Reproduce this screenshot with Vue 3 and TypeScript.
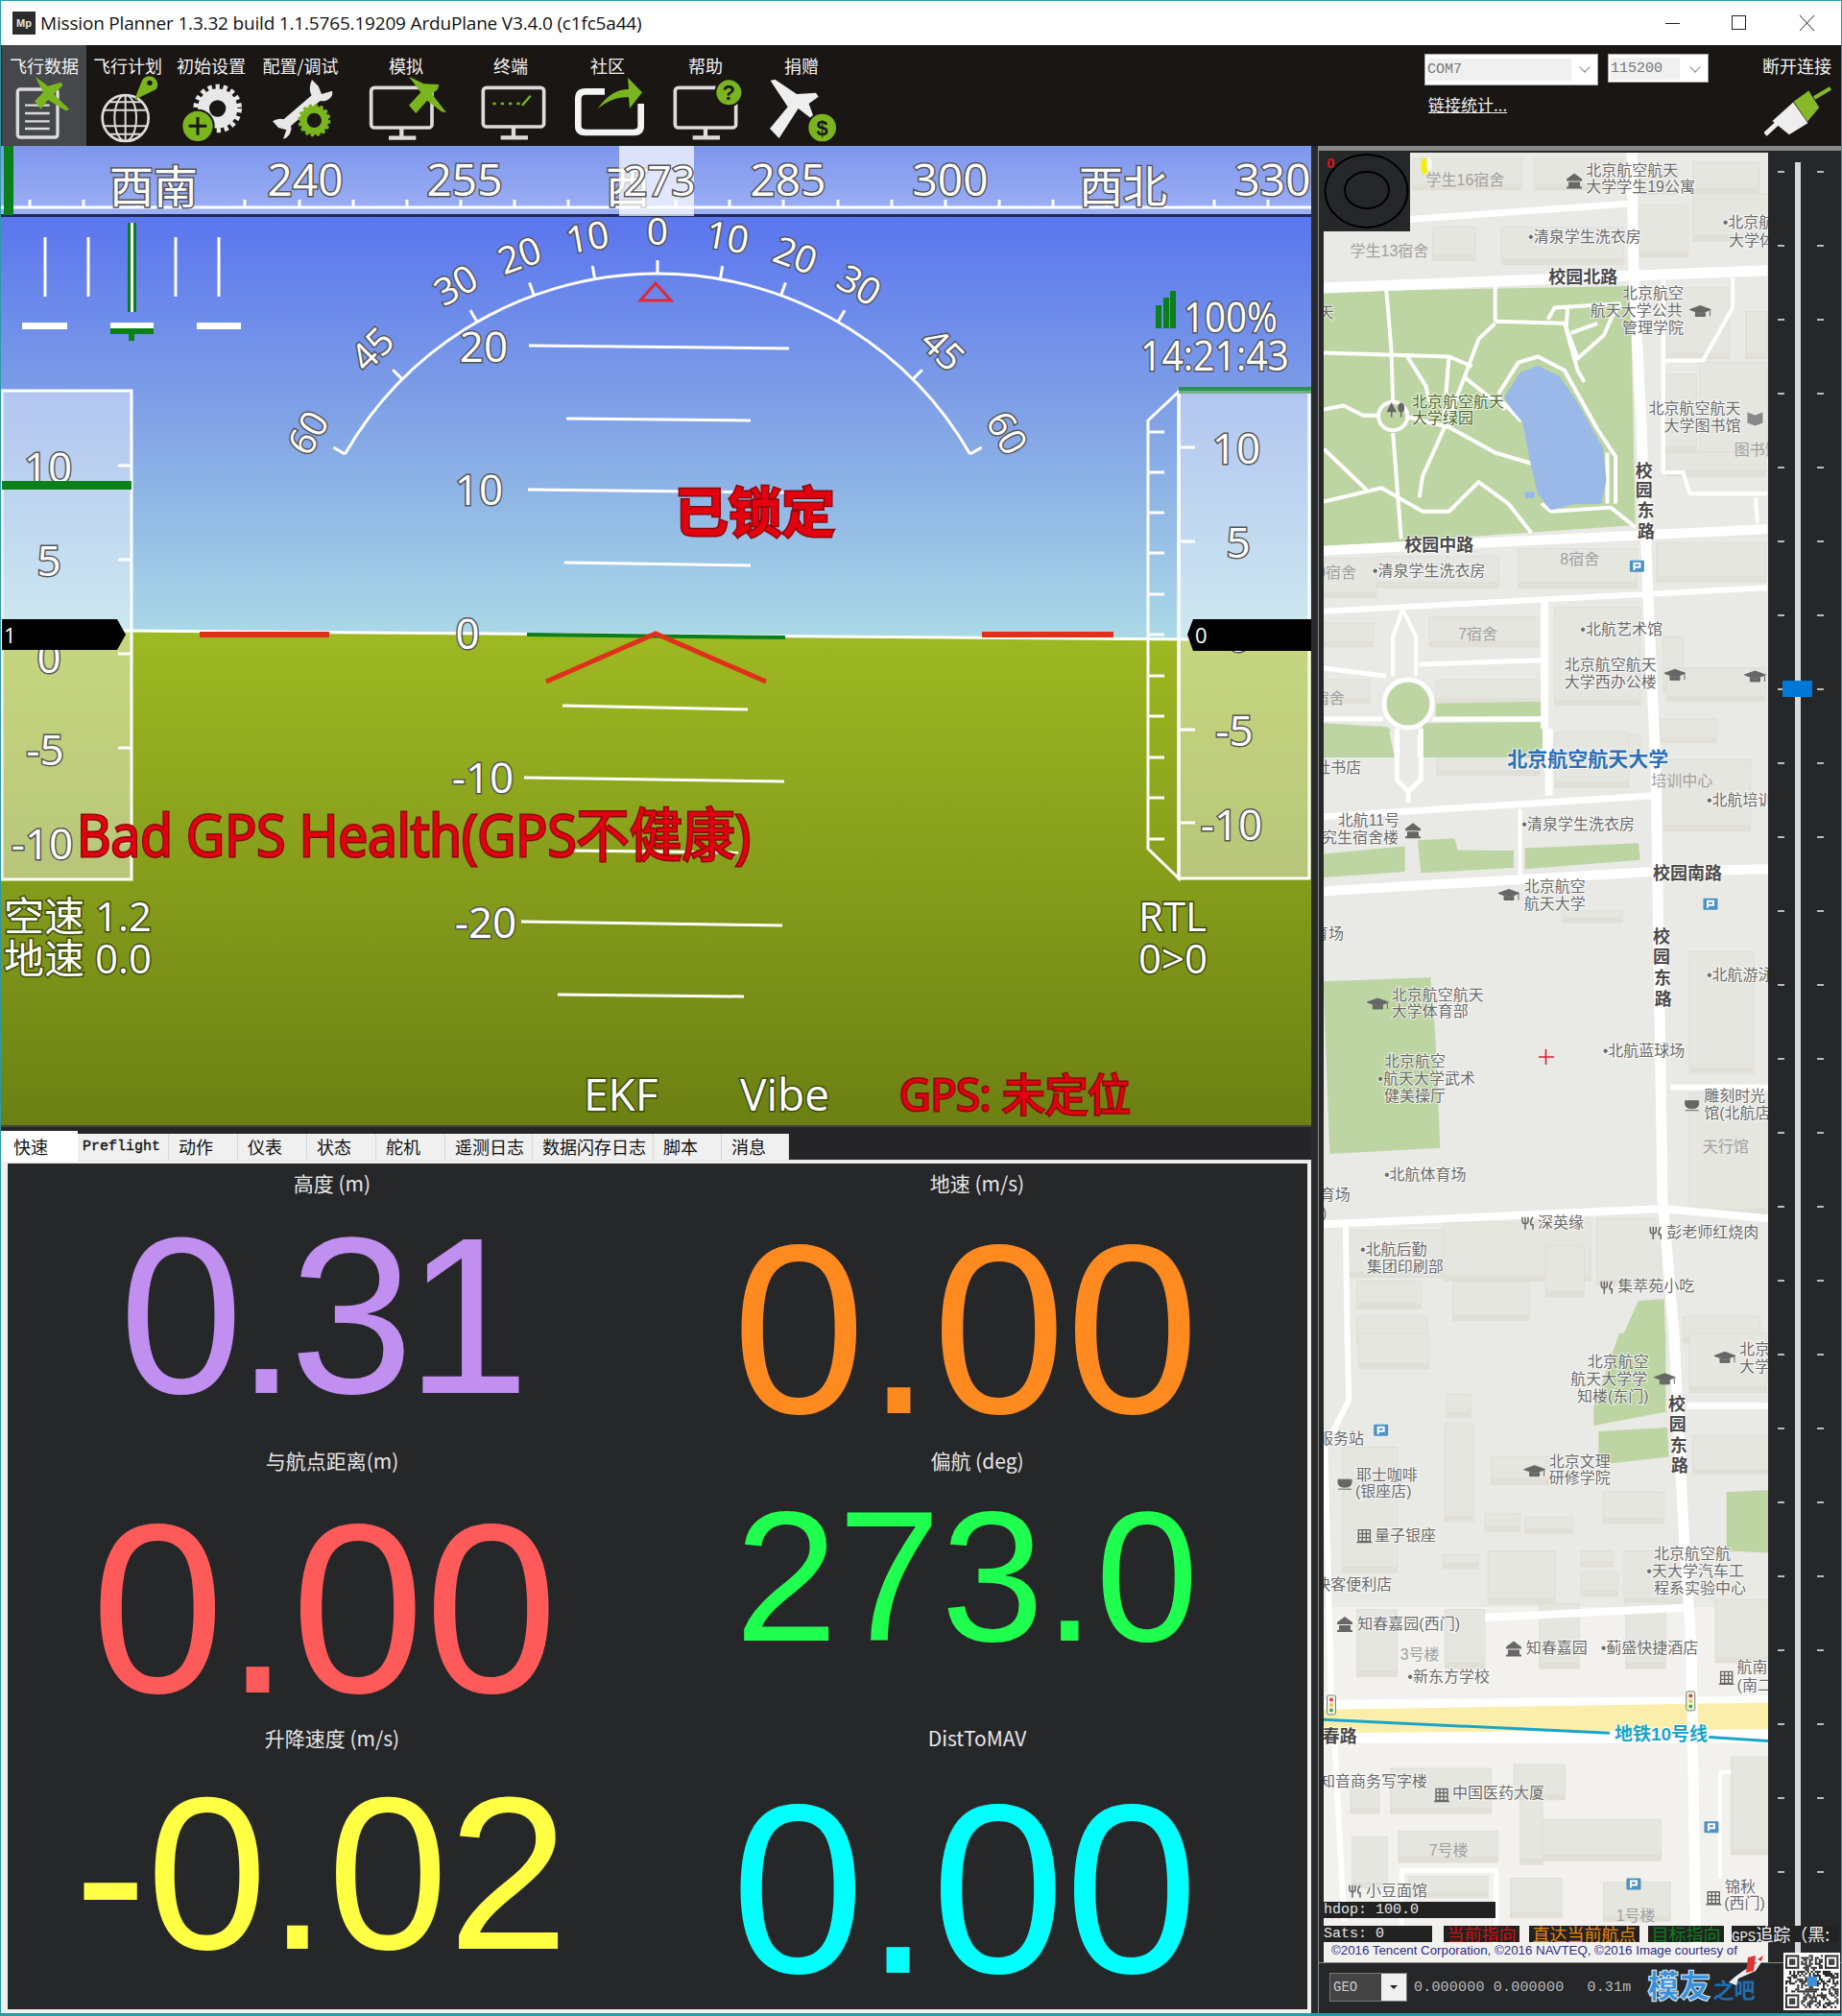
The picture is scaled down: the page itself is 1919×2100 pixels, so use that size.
<template>
  <div class="window">
    <!-- 標題列 -->
    <div class="titlebar">
      <div class="app-icon"><span>Mp</span></div>
      <span class="title">Mission Planner 1.3.32 build 1.1.5765.19209 ArduPlane V3.4.0 (c1fc5a44)</span>
      <div class="win-btns">
        <svg width="176" height="20" viewBox="0 0 176 20">
          <path d="M0 10.5H15" stroke="#222" fill="none" />
          <rect x="69.5" y="2.5" width="14" height="14" stroke="#222" fill="none" />
          <path d="M140 2L155 18M155 2L140 18" stroke="#222" fill="none" />
        </svg>
      </div>
    </div>

    <!-- 工具列 -->
    <div class="toolbar">
      <div
        v-for="item in menu"
        :key="item.id"
        class="menu-item"
        :class="{ active: item.id === 'data' }"
        :style="{ width: item.w + 'px' }"
      >
        <span class="menu-label">{{ item.label }}</span>
        <svg class="menu-icon" :width="item.w" height="74" :viewBox="`${item.vx} 84 ${item.w * 3} 222`">
          <g v-if="item.id === 'data'">
            <rect x="55" y="135" width="125" height="150" rx="8" class="ico-line" stroke-width="10" />
            <path d="M78 185H155M78 210H155M78 235H155M78 258H155" class="ico-line" stroke-width="7" />
            <path class="ico-green" d="M110 95L150 125L190 113L197 122L168 150L217 198L205 202L150 168L128 197L108 172L135 145Z" />
          </g>
          <g v-if="item.id === 'plan'">
            <circle cx="392" cy="225" r="72" class="ico-line" stroke-width="8" />
            <ellipse cx="392" cy="225" rx="34" ry="72" class="ico-line" stroke-width="6" />
            <path d="M392 153V297M325 200H459M325 250H459M340 175H444M340 275H444" class="ico-line" stroke-width="6" />
            <path class="ico-green" d="M420 168L445 105A26 26 0 1 1 488 135Z" />
            <circle cx="468" cy="115" r="8" fill="#1a1614" />
          </g>
          <g v-if="item.id === 'setup'">
            <circle cx="680" cy="195" r="44" fill="none" stroke="#e8e8e8" stroke-width="36" />
            <circle cx="680" cy="195" r="68" fill="none" stroke="#e8e8e8" stroke-width="16" stroke-dasharray="13 11" />
            <circle cx="618" cy="250" r="50" fill="#7ab51d" stroke="#1a1614" stroke-width="6" />
            <path d="M618 222V278M590 250H646" stroke="#1a1614" stroke-width="9" fill="none" />
          </g>
          <g v-if="item.id === 'config'">
            <path d="M990 160L885 250" stroke="#e8e8e8" stroke-width="30" fill="none" />
            <path d="M975 105C955 150 985 180 1020 170C1040 160 1040 150 1038 140L1005 150L995 125Z" fill="#e8e8e8" />
            <path d="M852 235C880 215 915 235 910 262C905 285 890 290 885 290L895 262L870 255Z" fill="#e8e8e8" />
            <circle cx="982" cy="232" r="34" fill="none" stroke="#7ab51d" stroke-width="22" />
            <circle cx="982" cy="232" r="46" fill="none" stroke="#7ab51d" stroke-width="10" stroke-dasharray="10 8" />
          </g>
          <g v-if="item.id === 'sim'">
            <rect x="50" y="130" width="190" height="125" rx="10" class="ico-line" stroke-width="11" />
            <path d="M145 255V285M105 287H190" class="ico-line" stroke-width="13" />
            <path class="ico-green" d="M168 95L215 118L262 120L258 135L240 150L285 208L270 205L225 170L190 210L168 185L205 145Z" />
          </g>
          <g v-if="item.id === 'term'">
            <rect x="400" y="130" width="190" height="122" rx="10" class="ico-line" stroke-width="11" />
            <path d="M495 252V282M455 286H540" class="ico-line" stroke-width="13" />
            <path d="M430 180h10M455 180h10M480 180h10M505 180h10" stroke="#7ab51d" stroke-width="7" fill="none" />
            <path d="M522 185L548 155" stroke="#7ab51d" stroke-width="7" fill="none" />
          </g>
          <g v-if="item.id === 'comm'">
            <path d="M780 142H720Q697 142 697 165V250Q697 270 720 270H870Q893 270 893 250V180" fill="none" stroke="#f4f4f4" stroke-width="20" />
            <path class="ico-green" d="M758 196C790 150 820 135 855 135L852 98L897 145L858 195L855 160C820 158 790 170 758 196Z" />
          </g>
          <g v-if="item.id === 'help'">
            <rect x="1000" y="130" width="190" height="125" rx="10" class="ico-line" stroke-width="11" />
            <path d="M1095 255V283M1055 286H1140" class="ico-line" stroke-width="13" />
            <circle cx="1168" cy="145" r="42" fill="#7ab51d" stroke="#1a1614" stroke-width="6" />
            <text x="1168" y="168" class="ico-glyph">?</text>
          </g>
          <g v-if="item.id === 'donate'">
            <path fill="#eee" d="M1298 108L1312 104L1380 150L1440 146L1448 158L1418 180L1438 235L1420 222L1385 195L1325 288L1296 258L1352 190Z" />
            <circle cx="1460" cy="255" r="46" fill="#7ab51d" stroke="#1a1614" stroke-width="6" />
            <text x="1460" y="280" class="ico-glyph">$</text>
          </g>
        </svg>
      </div>

      <div class="ports">
        <div class="port-row">
          <div class="combo combo-com"><span class="combo-txt">COM7</span><i class="chev"></i></div>
          <div class="combo combo-baud"><span class="combo-txt">115200</span><i class="chev"></i></div>
        </div>
        <a class="stats-link">链接统计...</a>
      </div>

      <div class="disconnect">
        <span class="menu-label">断开连接</span>
        <svg width="70" height="52" viewBox="0 0 70 52">
          <path d="M1 50L14 38" stroke="#eee" stroke-width="5" fill="none" />
          <path d="M10 36L30 18L44 38L26 49Z" fill="#eee" stroke="#eee" stroke-width="2" />
          <path d="M32 16L46 6L56 22L45 35Z" fill="#86b82a" stroke="#86b82a" stroke-width="2" />
          <path d="M52 12L69 2" stroke="#86b82a" stroke-width="4" fill="none" />
        </svg>
      </div>
    </div>

    <div class="main">
      <div class="left-col">
        <!-- HUD -->
        <svg class="hud" width="1365" height="1020" viewBox="1 153 1365 1020">
          <defs>
            <linearGradient id="sky" x1="0" y1="0" x2="0" y2="1">
              <stop offset="0" stop-color="#5b75ee" />
              <stop offset="0.5" stop-color="#83a5e6" />
              <stop offset="1" stop-color="#abdae6" />
            </linearGradient>
            <linearGradient id="ground" x1="0" y1="0" x2="0" y2="1">
              <stop offset="0" stop-color="#9fb923" />
              <stop offset="1" stop-color="#6c8013" />
            </linearGradient>
            <linearGradient id="headTape" x1="0" y1="0" x2="0" y2="1">
              <stop offset="0" stop-color="#7f96ee" />
              <stop offset="1" stop-color="#9cb0f4" />
            </linearGradient>
          </defs>
          <rect x="0" y="226" width="1366" height="442" fill="url(#sky)" />
          <path d="M0 657L1366 668V1173H0Z" fill="url(#ground)" />

          <!-- 俯仰刻度 -->
          <path v-for="(l, i) in pitchLines" :key="i" :d="`M${l[0]} ${l[1]}L${l[2]} ${l[3]}`" class="wline" />
          <path d="M0 657L1366 668" class="wline" stroke-width="3" />
          <text v-for="p in pitchLabels" :key="p.t" :x="p.x" :y="p.y + 16" class="ht mid" font-size="44">{{ p.t }}</text>

          <!-- 滾轉弧 -->
          <path :d="rollArc" class="wline" stroke-width="3" />
          <path v-for="r in rollMarks" :key="r.a" :d="r.tick" class="wline" stroke-width="2.5" />
          <text
            v-for="r in rollMarks"
            :key="'t' + r.a"
            :x="r.lx"
            :y="r.ly"
            :transform="`rotate(${r.a} ${r.lx} ${r.ly})`"
            class="ht mid central"
            font-size="39"
          >{{ Math.abs(r.a) }}</text>
          <path d="M683 296L699 314H667Z" fill="none" stroke="#dd2a3a" stroke-width="3" />

          <!-- 航向帶 -->
          <rect x="0" y="153" width="1366" height="71" fill="url(#headTape)" />
          <rect x="0" y="224" width="1366" height="3" fill="#1f2a58" />
          <path v-for="x in headTicks" :key="x" :d="`M${x} 217V209`" class="wline" stroke-width="2" />
          <path d="M0 217H1366" class="wline" stroke-width="3" />
          <rect x="4" y="153" width="10" height="72" fill="#0a7f1a" />
          <text v-for="h in headLabels" :key="h.t" :x="h.x" :y="h.y" class="ht mid cjk" font-size="46">{{ h.t }}</text>
          <text x="654" y="212" class="ht mid cjk" font-size="46">西</text>
          <rect x="645" y="153" width="78" height="73" fill="#fff" fill-opacity="0.72" />
          <text x="687" y="205" class="ht mid" font-size="44">273</text>

          <!-- 側滑條 -->
          <path v-for="x in [47, 92, 183, 228]" :key="x" :d="`M${x} 248V310`" class="wline" stroke-width="3" />
          <rect x="133" y="233" width="9" height="93" fill="#0a7f1a" />
          <rect x="136" y="233" width="3" height="93" fill="#fff" />
          <rect x="23" y="337" width="47" height="7" fill="#fff" />
          <rect x="115" y="337" width="45" height="6" fill="#fff" />
          <rect x="205" y="337" width="46" height="7" fill="#fff" />
          <rect x="115" y="343" width="45" height="6" fill="#0a7f1a" />
          <rect x="134" y="348" width="6" height="8" fill="#0a7f1a" />

          <!-- 空速帶 -->
          <rect x="2" y="408" width="135" height="509" fill="#fff" fill-opacity="0.42" stroke="#fff" stroke-width="3" />
          <path v-for="y in [486, 584, 682, 780, 878]" :key="y" :d="`M123 ${y}H136`" class="wline" />
          <text v-for="s in speedLabels" :key="s.t" :x="s.x" :y="s.y + 16" class="ht mid" font-size="44">{{ s.t }}</text>
          <rect x="2" y="502" width="135" height="9" fill="#0a7f1a" />
          <path d="M2 646H122L131 662L122 678H2Z" fill="#000" />
          <text x="4" y="671" class="lbl-in">1</text>

          <!-- 高度帶 -->
          <path d="M1196 439L1228 409V916L1196 885Z" fill="none" stroke="#fff" stroke-width="3" />
          <path v-for="y in altTicksL" :key="y" :d="`M1197 ${y}H1213`" class="wline" />
          <rect x="1228" y="409" width="136" height="507" fill="#fff" fill-opacity="0.42" stroke="#fff" stroke-width="3" />
          <rect x="1228" y="404" width="138" height="4" fill="#2f8f55" />
          <rect x="1228" y="408" width="138" height="3" fill="#6fb08a" />
          <path v-for="y in [467, 565, 761, 858]" :key="y" :d="`M1230 ${y}H1245`" class="wline" />
          <text v-for="s in altLabels" :key="s.t" :x="s.x" :y="s.y + 16" class="ht mid" font-size="44">{{ s.t }}</text>
          <path d="M1237 662L1243 646H1366V679H1243Z" fill="#000" />
          <text x="1245" y="671" class="lbl-in">0</text>

          <!-- 姿態指示 -->
          <rect x="208" y="659" width="135" height="6" fill="#e0301a" />
          <rect x="1023" y="659" width="137" height="6" fill="#e0301a" />
          <path d="M549 662L818 665" stroke="#0a7f1a" stroke-width="4" fill="none" />
          <path d="M569 711L683 661L798 711" stroke="#e0301a" stroke-width="5" fill="none" />

          <!-- 訊號與時間 -->
          <rect x="1204" y="319" width="6" height="24" fill="#0a7f1a" />
          <rect x="1212" y="311" width="6" height="32" fill="#0a7f1a" />
          <rect x="1219" y="304" width="6" height="39" fill="#0a7f1a" />
          <text x="1233" y="347" class="ht" font-size="44" textLength="98" lengthAdjust="spacingAndGlyphs">100%</text>
          <text x="1188" y="387" class="ht" font-size="44" textLength="155" lengthAdjust="spacingAndGlyphs">14:21:43</text>

          <!-- 狀態文字 -->
          <text x="703" y="555" class="warn heavy" font-size="56" textLength="167" lengthAdjust="spacingAndGlyphs">已锁定</text>
          <text x="80" y="893" class="warn" font-size="60" textLength="702" lengthAdjust="spacingAndGlyphs">Bad GPS Health(GPS不健康)</text>
          <text x="4" y="971" class="ht plain" font-size="42">空速 1.2</text>
          <text x="4" y="1015" class="ht plain" font-size="42">地速 0.0</text>
          <text x="1186" y="971" class="ht plain" font-size="42">RTL</text>
          <text x="1186" y="1015" class="ht plain" font-size="42">0&gt;0</text>
          <text x="608" y="1158" class="ht plain" font-size="46">EKF</text>
          <text x="771" y="1158" class="ht plain" font-size="46">Vibe</text>
          <text x="937" y="1158" class="warn" font-size="46" textLength="241" lengthAdjust="spacingAndGlyphs">GPS: 未定位</text>
        </svg>

        <!-- 分頁 -->
        <div class="tabs">
          <div
            v-for="(t, i) in tabs"
            :key="t.label"
            class="tab"
            :class="{ active: i === 0, mono: t.label === 'Preflight' }"
            :style="{ width: t.w + 'px' }"
          >{{ t.label }}</div>
        </div>
        <div class="tab-page">
          <div class="quick">
            <div v-for="q in quick" :key="q.label" class="quick-cell">
              <div class="quick-label">{{ q.label }}</div>
              <div
                class="quick-value"
                :style="{ color: q.color, fontSize: q.size + 'px', marginTop: q.dy + 'px', marginRight: q.dx * 2 + 'px', letterSpacing: q.ls + 'px' }"
              >{{ q.value }}</div>
            </div>
          </div>
        </div>
      </div>

      <div class="right-col">
        <div class="map-row">
          <!-- 地圖 -->
          <svg class="map" width="463" height="1885" viewBox="1380 160 463 1885">
            <defs>
              <g id="i-home"><path d="M-8 -2L0 -8L8 -2V0H-8ZM-6 1H6V6H8V8H-8V6H-6Z" fill="#666" /></g>
              <g id="i-hat"><path d="M-11 -2L0 -6L11 -2L0 2ZM-5 1L0 3L5 1V5H-5ZM10 -1V5" fill="#666" stroke="#666" /></g>
              <g id="i-book"><path d="M-8 -6L0 -3L8 -6V5L0 8L-8 5Z" fill="#888" /></g>
              <g id="i-tree"><path d="M-9 6V-1M-9 -8L-13 0H-5ZM1 6V0" stroke="#666" stroke-width="1.5" fill="#666" /><ellipse cx="1" cy="-4" rx="3.5" ry="5" fill="#666" /></g>
              <g id="i-p"><rect x="-7.5" y="-6" width="15" height="12" rx="1" fill="#4c93c4" /><path d="M-3 4V-3H3V1H-3" stroke="#fff" stroke-width="2" fill="none" /></g>
              <g id="i-cup"><path d="M-7 -5H7V-2Q7 3 0 3Q-7 3 -7 -2ZM-7 5H7" fill="#666" stroke="#666" /></g>
              <g id="i-bldg"><path d="M-6 -6H6V6H-6ZM-6 -2H6M-6 2H6M-2 -6V6M2 -6V6M-8 7H8" fill="none" stroke="#666" stroke-width="1.4" /></g>
              <g id="i-fork"><path d="M-6 -6V-2Q-6 1 -3 1V7M-3 -6V0M0 -6V-2Q0 1 -3 1M5 -6Q2 -2 3 2H5V7" fill="none" stroke="#666" stroke-width="1.5" /></g>
              <g id="i-light"><rect x="-4.5" y="-10" width="9" height="20" rx="2" fill="#f6f3e6" stroke="#6a8a6a" /><circle cy="-5.5" r="2" fill="#c44" /><circle r="2" fill="#dc4" /><circle cy="5.5" r="2" fill="#4a4" /></g>
            </defs>
            <rect x="1380" y="160" width="463" height="1885" fill="#e9e9e5" />
            <rect x="1380" y="1675" width="463" height="370" fill="#f2f1ed" />

            <!-- 建物 -->
            <g v-for="(b, i) in lots" :key="'lot' + i">
              <rect :x="b.x" :y="b.y" :width="b.w" :height="b.h" fill="#e6e6e1" stroke="#dedfd8" />
              <rect :x="b.x" :y="b.y + b.h - 6" :width="b.w" height="6" fill="#e0e0d8" />
            </g>

            <!-- 綠地與水面 -->
            <g :transform="zoneTf.a">
              <path d="M0 380L930 365L945 975L0 1030Z" class="green" />
              <path d="M340 1430L660 1425V1462L340 1465ZM300 1480L665 1478V1568H300ZM0 1480L195 1490L215 1568H0Z" class="green" />
              <path v-for="(d, i) in roadsA" :key="'ra' + i" :d="d" class="road thin" />
              <path d="M555 650L600 590L650 575L710 600L760 660L800 720L840 780L850 860L835 915L760 915L690 930L655 890L630 800L610 710L580 680Z" fill="#9bb9e8" stroke="#9bb9e8" stroke-width="5" stroke-linejoin="round" vector-effect="non-scaling-stroke" />
              <path d="M610 890h30v16h-30z" fill="#9bb9e8" />
              <ellipse cx="210" cy="697" rx="44" ry="36" fill="none" stroke="#fff" stroke-width="4" vector-effect="non-scaling-stroke" />
              <path v-for="(d, i) in roadsAWide" :key="'rb' + i" :d="d.d" class="road" :stroke-width="d.w" />
            </g>
            <g :transform="zoneTf.b">
              <path d="M0 0H215L200 60H0ZM320 0H690V50H320Z" class="green" />
              <path d="M0 320L260 300V365L0 380ZM300 285L415 280L425 310L600 312L600 355L310 368ZM635 305L990 292L995 335L635 358Z" class="green" />
              <path d="M5 645L340 635L355 780L370 1070L25 1085Z" class="green" />
              <path d="M990 1460L1070 1455L1075 1568H930Z" class="green" />
              <path v-for="(d, i) in roadsB" :key="'rc' + i" :d="d.d" class="road" :stroke-width="d.w" />
            </g>
            <g :transform="zoneTf.c">
              <path d="M930 0H1075V200L850 235L850 190Z" class="green" />
              <path d="M865 250L1080 240L1085 315L865 335Z" class="green" />
              <path d="M1265 405L1395 400V560L1265 555Z" class="green" />
              <path d="M0 935L1395 925V1045H0Z" fill="#fff" />
              <path d="M0 960L1395 942V1010L0 1020Z" fill="#fbeeaa" />
              <path v-for="(d, i) in roadsC" :key="'rd' + i" :d="d.d" class="road" :stroke-width="d.w" />
              <path d="M0 985L900 1020M1210 1030L1395 1040" fill="none" stroke="#1aa5c8" stroke-width="3" vector-effect="non-scaling-stroke" />
            </g>
            <path d="M1701 160L1703 285L1711 444L1718 623L1726 800L1733 1250L1745 1390L1755 1594L1763 1716L1768 2045" class="road" stroke-width="11" />

            <!-- 圓環 -->
            <circle cx="1468" cy="734" r="25" fill="#bdd5a2" stroke="#fff" stroke-width="5" />

            <!-- 標記 -->
            <use v-for="(m, i) in marks" :key="'m' + i" :href="'#i-' + m.t" :x="m.x" :y="m.y" />
            <path d="M1604 1102H1620M1611.5 1094V1110" stroke="#e02030" stroke-width="1.6" />

            <!-- 文字 -->
            <text
              v-for="(l, i) in labels"
              :key="'l' + i"
              :x="l.x"
              :y="l.y"
              class="place"
              :class="l.k"
            >{{ l.t }}</text>

            <!-- 羅盤 -->
            <rect x="1380" y="160" width="90" height="82" fill="#262729" />
            <ellipse cx="1424.5" cy="200" rx="43" ry="38" fill="none" stroke="#000" stroke-width="2" />
            <ellipse cx="1425" cy="199" rx="23" ry="19" fill="none" stroke="#000" stroke-width="2" />
            <text x="1383" y="176" class="red-zero">0</text>
            <ellipse cx="1485" cy="174" rx="4" ry="9" fill="#f2ee1a" />
            <ellipse cx="1490" cy="172" rx="2.5" ry="7" fill="#fff" />
          </svg>

          <div class="slider">
            <i v-for="y in sliderTicks" :key="y" class="tick tick-l" :style="{ top: y + 'px' }"></i>
            <i v-for="y in sliderTicks" :key="'r' + y" class="tick tick-r" :style="{ top: y + 'px' }"></i>
            <div class="track"></div>
            <div class="thumb"></div>
          </div>

          <!-- 地圖覆蓋文字 -->
          <div class="ovl hdop">hdop: 100.0</div>
          <div class="ovl sats">Sats: 0</div>
          <div class="ovl tag-cur">当前指向</div>
          <div class="ovl tag-wp">直达当前航点</div>
          <div class="ovl tag-tgt">目标指向</div>
          <div class="ovl tag-gps"><span class="mono-part">GPS</span>追踪（黑:</div>
          <div class="copyright">©2016 Tencent Corporation, ©2016 NAVTEQ, ©2016 Image courtesy of</div>
        </div>

        <div class="status-bar">
          <div class="geo"><span class="geo-txt">GEO</span><span class="geo-btn"><i></i></span></div>
          <span class="coord">0.000000 0.000000</span>
          <span class="coord dist">0.31m</span>
          <div class="logo">
            <span class="logo-a">模友</span><span class="logo-b">之吧</span>
            <svg class="logo-plane" width="40" height="34" viewBox="0 0 40 34">
              <path d="M2 30Q14 18 38 6L30 18L12 26L10 33Z" fill="#eee" />
              <path d="M22 4L30 2L28 18L20 20ZM32 6L38 2L36 8Z" fill="#d33" />
            </svg>
          </div>
          <svg class="qr" width="59" height="60" viewBox="0 0 59 60">
            <rect width="59" height="60" fill="#fff" />
            <rect v-for="(c, i) in qrCells" :key="i" :x="c.x" :y="c.y" width="2.05" height="2.05" fill="#222" />
            <rect x="25" y="25" width="10" height="10" fill="#3d8fd8" />
          </svg>
        </div>
      </div>
    </div>
  </div>
</template>

<script setup lang="ts">
// 工具列項目 (vx = 圖示 viewBox 起點)
const menu = [
  { id: 'data', label: '飞行数据', w: 88, vx: 6 },
  { id: 'plan', label: '飞行计划', w: 86, vx: 270 },
  { id: 'setup', label: '初始设置', w: 88, vx: 528 },
  { id: 'config', label: '配置/调试', w: 98, vx: 792 },
  { id: 'sim', label: '模拟', w: 122, vx: -24 },
  { id: 'term', label: '终端', w: 96, vx: 342 },
  { id: 'comm', label: '社区', w: 106, vx: 630 },
  { id: 'help', label: '帮助', w: 98, vx: 948 },
  { id: 'donate', label: '捐赠', w: 102, vx: 1242 }
];

const tabs = [
  { label: '快速', w: 80 },
  { label: 'Preflight', w: 95 },
  { label: '动作', w: 72 },
  { label: '仪表', w: 72 },
  { label: '状态', w: 72 },
  { label: '舵机', w: 72 },
  { label: '遥测日志', w: 91 },
  { label: '数据闪存日志', w: 126 },
  { label: '脚本', w: 71 },
  { label: '消息', w: 70 }
];

const quick = [
  { label: '高度 (m)', value: '0.31', color: '#c08ff0', size: 232, dy: -6, dx: 12, ls: -8 },
  { label: '地速 (m/s)', value: '0.00', color: '#ff8a20', size: 250, dy: 9, dx: 12, ls: 0 },
  { label: '与航点距离(m)', value: '0.00', color: '#ff5a5a', size: 250, dy: 11, dx: 8, ls: 0 },
  { label: '偏航 (deg)', value: '273.0', color: '#1eff50', size: 193, dy: -23, dx: 11, ls: 0 },
  { label: '升降速度 (m/s)', value: '-0.02', color: '#ffff44', size: 226, dy: -3, dx: 11, ls: 0 },
  { label: 'DistToMAV', value: '0.00', color: '#00ffff', size: 250, dy: 14, dx: 13, ls: 0 }
];

// HUD
const pitchLines = [
  [551, 361, 822, 364], [590, 437, 782, 439], [550, 511, 819, 514], [588, 587, 782, 590],
  [586, 736, 779, 740], [546, 811, 817, 815], [593, 887, 769, 889], [543, 961, 815, 965], [581, 1037, 775, 1039]
];
const pitchLabels = [
  { t: '20', x: 504, y: 362 }, { t: '10', x: 499, y: 511 }, { t: '0', x: 487, y: 661 },
  { t: '-10', x: 503, y: 811 }, { t: '-20', x: 506, y: 962 }
];
const speedLabels = [
  { t: '10', x: 50, y: 488 }, { t: '5', x: 51, y: 585 }, { t: '0', x: 51, y: 686 },
  { t: '-5', x: 47, y: 782 }, { t: '-10', x: 44, y: 880 }
];
const altLabels = [
  { t: '10', x: 1288, y: 468 }, { t: '5', x: 1290, y: 566 }, { t: '0', x: 1290, y: 664 },
  { t: '-5', x: 1286, y: 762 }, { t: '-10', x: 1283, y: 860 }
];
const altTicksL = [451, 493, 535, 577, 620, 662, 705, 747, 790, 832, 875];
const headTicks = Array.from({ length: 25 }, (_, i) => Math.round(31 + i * 56.1));
const headLabels = [
  { t: '西南', x: 160, y: 212 }, { t: '240', x: 318, y: 205 }, { t: '255', x: 484, y: 205 }, { t: '285', x: 821, y: 205 },
  { t: '300', x: 990, y: 205 }, { t: '西北', x: 1170, y: 212 }, { t: '330', x: 1326, y: 205 }
];

const CX = 685;
const CY = 662;
const R = 376;
const rad = (a: number) => (a * Math.PI) / 180;
const polar = (r: number, a: number) => [CX + r * Math.sin(rad(a)), CY - r * Math.cos(rad(a))];
const [ax, ay] = polar(R, -60);
const [bx, by] = polar(R, 60);
const rollArc = `M${ax} ${ay}A${R} ${R} 0 0 1 ${bx} ${by}`;
const rollMarks = [-60, -45, -30, -20, -10, 0, 10, 20, 30, 45, 60].map((a) => {
  const [x1, y1] = polar(R, a);
  const [x2, y2] = polar(R + 14, a);
  const [lx, ly] = polar(R + 46, a);
  return { a, tick: `M${x1} ${y1}L${x2} ${y2}`, lx, ly };
});

// 地圖：三段座標 (取自放大圖)
type Zone = 'a' | 'b' | 'c';
const zones: Record<Zone, { x: number; y: number; sx: number; sy: number }> = {
  a: { x: 1380, y: 150, sx: 0.3436, sy: 0.4082 },
  b: { x: 1378, y: 760, sx: 0.3333, sy: 0.4082 },
  c: { x: 1378, y: 1390, sx: 0.3333, sy: 0.4082 }
};
const zoneTf = {
  a: `translate(${zones.a.x} ${zones.a.y}) scale(${zones.a.sx} ${zones.a.sy})`,
  b: `translate(${zones.b.x} ${zones.b.y}) scale(${zones.b.sx} ${zones.b.sy})`,
  c: `translate(${zones.c.x} ${zones.c.y}) scale(${zones.c.sx} ${zones.c.sy})`
};
const fx = (z: Zone, x: number) => zones[z].x + x * zones[z].sx;
const fy = (z: Zone, y: number) => zones[z].y + y * zones[z].sy;

const rawLots: [Zone, number, number, number, number][] = [
  ['a', 270, 40, 330, 80], ['a', 640, 40, 270, 80], ['a', 1120, 50, 200, 80], ['a', 955, 60, 120, 70],
  ['a', 330, 215, 130, 85], ['a', 540, 215, 370, 95], ['a', 955, 160, 150, 130], ['a', 1120, 130, 230, 120],
  ['a', 1030, 590, 100, 200], ['a', 1140, 560, 205, 240], ['a', 1040, 790, 300, 60], ['a', 1040, 370, 190, 180], ['a', 1280, 430, 65, 120],
  ['a', 0, 1060, 160, 100], ['a', 160, 1055, 370, 80], ['a', 590, 1035, 360, 100], ['a', 1010, 1020, 330, 100],
  ['a', 320, 1210, 330, 75], ['a', 0, 1225, 150, 60], ['a', 340, 1370, 320, 60], ['a', 0, 1370, 140, 60],
  ['a', 700, 1185, 260, 250], ['a', 1030, 1260, 60, 140], ['a', 1040, 1340, 300, 85], ['a', 700, 1510, 260, 58], ['a', 1020, 1470, 170, 60],
  ['b', 360, 60, 320, 60], ['b', 730, 10, 230, 140], ['b', 1070, 80, 270, 180], ['b', 1150, 570, 200, 310], ['b', 1150, 930, 240, 310],
  ['b', 80, 1280, 300, 120], ['b', 380, 1260, 460, 150], ['b', 700, 1320, 120, 130], ['b', 410, 1410, 240, 100], ['b', 110, 1410, 200, 70],
  ['b', 860, 1250, 200, 170], ['b', 110, 1500, 220, 68], ['b', 1130, 1500, 240, 68], ['b', 750, 465, 190, 30],
  ['c', 115, 0, 220, 90], ['c', 1150, 0, 240, 150], ['c', 390, 155, 75, 60], ['c', 385, 230, 90, 250], ['c', 510, 460, 110, 45],
  ['c', 635, 470, 150, 40], ['c', 530, 315, 180, 70], ['c', 880, 405, 190, 80], ['c', 380, 565, 110, 35], ['c', 520, 555, 210, 135],
  ['c', 810, 555, 100, 40], ['c', 810, 610, 115, 60], ['c', 945, 555, 200, 135], ['c', 1160, 260, 235, 100], ['c', 65, 290, 170, 320],
  ['c', 1230, 680, 165, 160], ['c', 680, 690, 125, 165], ['c', 950, 685, 125, 170], ['c', 385, 705, 125, 150], ['c', 110, 705, 125, 170],
  ['c', 95, 1285, 110, 130], ['c', 240, 1270, 310, 80], ['c', 600, 1100, 160, 90], ['c', 215, 1110, 315, 115], ['c', 90, 1155, 90, 70],
  ['c', 620, 1190, 70, 165], ['c', 690, 1240, 370, 105], ['c', 590, 1390, 160, 100], ['c', 880, 1400, 210, 100], ['c', 1280, 1080, 115, 250], ['c', 270, 1385, 250, 55]
];
const lots = rawLots.map(([z, x, y, w, h]) => ({
  x: fx(z, x), y: fy(z, y), w: w * zones[z].sx, h: h * zones[z].sy
}));

const roadsA = [
  'M190 375L205 525L210 660M210 740L235 1010',
  'M520 365V455',
  'M0 535L380 545L450 570',
  'M520 460L470 500L430 590L380 700L300 850L290 905',
  'M520 455L730 460L770 580L790 610',
  'M680 450L700 420L900 410M740 420L735 470L770 550L850 490L870 450L900 410M750 485L830 460',
  'M530 640L590 560L650 545L730 580L830 730L885 800L885 920',
  'M530 650L600 710M860 790L860 920',
  'M430 600L550 680M250 540L310 620L320 660M380 545L365 700',
  'M0 680L60 670L120 695L165 695M260 700L380 725L520 790L640 820',
  'M0 780L130 885M0 915L175 880L300 940L380 940L470 865L560 920L630 995',
  'M660 920L690 940L870 930L945 980'
];
const roadsAWide = [
  { d: 'M0 370L1345 325', w: 11 },
  { d: 'M260 195L920 155', w: 7 },
  { d: 'M0 1040L1345 985', w: 10 },
  { d: 'M0 1195L660 1165L1345 1135', w: 6 },
  { d: 'M670 1165V1568', w: 8 },
  { d: 'M1240 345V420L1150 555H1030M1030 350V840H1090L1110 895H1345M1310 905L1315 970', w: 4 },
  { d: 'M240 1190L210 1260V1360M240 1190L280 1260V1360', w: 4 },
  { d: 'M0 1340L190 1360M290 1330L660 1320M0 1470H180M330 1470H660', w: 5 },
  { d: 'M225 1510V1568M290 1510V1568', w: 4 }
];
const roadsB = [
  { d: 'M235 0V130L270 160L310 130V0M270 160V190', w: 5 },
  { d: 'M0 225L1050 170', w: 7 },
  { d: 'M710 0V170', w: 8 },
  { d: 'M0 415L1035 365L1395 358', w: 10 },
  { d: 'M620 205V375', w: 4 },
  { d: 'M0 1265L1065 1225L1395 1250', w: 8 },
  { d: 'M75 1270L80 1568', w: 6 },
  { d: 'M1090 915H1395', w: 6 }
];
const roadsC = [
  { d: 'M80 0L85 170L10 290L30 930', w: 6 },
  { d: 'M40 1040L70 1500', w: 6 },
  { d: 'M510 725L1130 700', w: 8 },
  { d: 'M1140 185H1395', w: 7 },
  { d: 'M250 1510V1370H545V1568', w: 5 },
  { d: 'M1245 1390V1120H1280', w: 4 }
];

const rawMarks: [Zone, number, number, string][] = [
  ['a', 760, 97, 'home'], ['a', 1142, 430, 'hat'], ['a', 1308, 702, 'book'], ['a', 232, 685, 'tree'], ['a', 950, 1080, 'p'], ['a', 1065, 1358, 'hat'], ['a', 1308, 1362, 'hat'],
  ['b', 285, 260, 'home'], ['b', 585, 425, 'hat'], ['b', 1215, 448, 'p'], ['b', 175, 703, 'hat'], ['b', 1157, 962, 'cup'], ['b', 645, 1261, 'fork'], ['b', 1045, 1286, 'fork'], ['b', 892, 1425, 'fork'],
  ['c', 1260, 62, 'hat'], ['c', 1072, 117, 'hat'], ['c', 185, 247, 'p'], ['c', 72, 385, 'cup'], ['c', 665, 352, 'hat'], ['c', 133, 516, 'bldg'], ['c', 72, 742, 'home'], ['c', 600, 805, 'home'],
  ['c', 1265, 878, 'bldg'], ['c', 375, 1177, 'bldg'], ['c', 1218, 1260, 'p'], ['c', 105, 1423, 'fork'], ['c', 975, 1405, 'p'], ['c', 1225, 1440, 'bldg'], ['c', 30, 948, 'light'], ['c', 1153, 938, 'light']
];
const marks = rawMarks.map(([z, x, y, t]) => ({ x: fx(z, x), y: fy(z, y), t }));

const rawLabels: [Zone, number, number, string, string?][] = [
  ['a', 310, 95, '学生16宿舍', 'light'], ['a', 795, 70, '北京航空航天'], ['a', 795, 112, '大学学生19公寓'], ['a', 620, 238, '•清泉学生洗衣房'],
  ['a', 80, 275, '学生13宿舍', 'light'], ['a', 1210, 203, '•北京航'], ['a', 1228, 248, '大学体'], ['a', 682, 345, '校园北路', 'bold'],
  ['a', 905, 383, '北京航空'], ['a', 808, 428, '航天大学公共'], ['a', 905, 472, '管理学院'], ['a', -15, 432, '天'],
  ['a', 268, 660, '北京航空航天', 'park'], ['a', 268, 703, '大学绿园', 'park'], ['a', 985, 678, '北京航空航天'], ['a', 1032, 722, '大学图书馆'], ['a', 1245, 782, '图书馆', 'light'],
  ['a', 945, 838, '校', 'bold'], ['a', 945, 888, '园', 'bold'], ['a', 950, 940, '东', 'bold'], ['a', 952, 993, '路', 'bold'], ['a', 245, 1027, '校园中路', 'bold'],
  ['a', -20, 1097, '9宿舍', 'light'], ['a', 148, 1092, '•清泉学生洗衣房'], ['a', 717, 1063, '8宿舍', 'light'], ['a', 408, 1252, '7宿舍', 'light'], ['a', 778, 1241, '•北航艺术馆'],
  ['a', 730, 1332, '北京航空航天'], ['a', 730, 1376, '大学西办公楼'], ['a', -30, 1416, '宿舍', 'light'],
  ['b', -20, 98, '社书店'], ['b', 580, 82, '北京航空航天大学', 'blue'], ['b', 1030, 133, '培训中心', 'light'], ['b', 1203, 183, '•北航培训'],
  ['b', 50, 235, '北航11号'], ['b', -48, 278, '研究生宿舍楼'], ['b', 625, 243, '•清泉学生洗衣房'], ['b', 1035, 372, '校园南路', 'bold'], ['b', 632, 403, '北京航空'], ['b', 632, 447, '航天大学'],
  ['b', -75, 523, '体育场'], ['b', 1035, 533, '校', 'bold'], ['b', 1035, 585, '园', 'bold'], ['b', 1038, 638, '东', 'bold'], ['b', 1040, 692, '路', 'bold'],
  ['b', 1203, 628, '•北航游泳'], ['b', 218, 680, '北京航空航天'], ['b', 218, 722, '大学体育部'], ['b', 878, 823, '•北航蓝球场'], ['b', 195, 850, '北京航空'], ['b', 175, 893, '•航天大学武术'], ['b', 195, 937, '健美操厅'],
  ['b', 1195, 937, '雕刻时光'], ['b', 1195, 982, '馆(北航店'], ['b', 1190, 1066, '天行馆', 'light'], ['b', 195, 1138, '•北航体育场'], ['b', -55, 1190, '体育场'], ['b', 0, 1237, ')'],
  ['b', 675, 1261, '深英缘'], ['b', 1078, 1286, '彭老师红烧肉'], ['b', 120, 1330, '•北航后勤'], ['b', 140, 1374, '集团印刷部'], ['b', 925, 1423, '集萃苑小吃'],
  ['c', 830, 72, '北京航空'], ['c', 778, 117, '航天大学学'], ['c', 798, 160, '知楼(东门)'], ['c', 1305, 40, '北京'], ['c', 1305, 85, '大学'],
  ['c', 1083, 183, '校', 'bold'], ['c', 1085, 235, '园', 'bold'], ['c', 1088, 287, '东', 'bold'], ['c', 1092, 340, '路', 'bold'], ['c', -12, 268, '服务站'],
  ['c', 107, 362, '耶士咖啡'], ['c', 105, 404, '(银座店)'], ['c', 710, 326, '北京文理'], ['c', 710, 368, '研修学院'], ['c', 165, 516, '量子银座'],
  ['c', 1038, 562, '北京航空航'], ['c', 1015, 606, '•天大学汽车工'], ['c', 1038, 650, '程系实验中心'], ['c', -20, 640, '快客便利店'], ['c', 112, 740, '知春嘉园(西门)'], ['c', 245, 820, '3号楼', 'light'],
  ['c', 638, 803, '知春嘉园'], ['c', 872, 803, '•蓟盛快捷酒店'], ['c', 268, 877, '•新东方学校'], ['c', 1298, 852, '航南'], ['c', 1298, 898, '(南二'],
  ['c', 2, 1030, '春路', 'bold'], ['c', 915, 1025, '地铁10号线', 'teal'], ['c', -6, 1143, '知音商务写字楼'], ['c', 408, 1173, '中国医药大厦'], ['c', 335, 1320, '7号楼', 'light'],
  ['c', 138, 1423, '小豆面馆'], ['c', 1260, 1413, '锦秋'], ['c', 1258, 1455, '(西门)'], ['c', 920, 1487, '1号楼', 'light']
];
const labels = rawLabels.map(([z, x, y, t, k]) => ({ x: fx(z, x), y: fy(z, y) + 5.5, t, k: k || '' }));

const sliderTicks = Array.from({ length: 24 }, (_, i) => 19 + i * 77);

// QR 圖樣 (固定亂數)
const qrCells = (() => {
  const n = 27;
  const size = 2.05;
  const cells: { x: number; y: number }[] = [];
  const finder = (r: number, c: number) => {
    if (r > 6 || c > 6) return false;
    return r === 0 || r === 6 || c === 0 || c === 6 || (r >= 2 && r <= 4 && c >= 2 && c <= 4);
  };
  let seed = 7;
  for (let r = 0; r < n; r++) {
    for (let c = 0; c < n; c++) {
      seed = (seed * 1103515245 + 12345) & 0x7fffffff;
      const inF = (r < 8 && c < 8) || (r < 8 && c >= n - 8) || (r >= n - 8 && c < 8);
      let on = (seed >> 16) % 2 === 0;
      if (inF) on = finder(r, c) || finder(r, n - 1 - c) || finder(n - 1 - r, c);
      if (on) cells.push({ x: 2 + c * size, y: 2.5 + r * size });
    }
  }
  return cells;
})();
</script>

<style scoped>
.window {
  width: 1919px;
  height: 2100px;
  box-sizing: border-box;
  border: 1px solid #2a9aa6;
  border-bottom-width: 3px;
  display: flex;
  flex-direction: column;
  background: #2a2b2d;
  font-family: "Noto Sans CJK SC", "Noto Sans", sans-serif;
  overflow: hidden;
}

/* 標題列 */
.titlebar {
  height: 46px;
  background: #fff;
  display: flex;
  align-items: center;
  padding-left: 12px;
  flex: none;
}
.app-icon {
  width: 24px;
  height: 24px;
  background: #2c2c2a;
  color: #e8e8e0;
  font: bold 11px "Liberation Sans", sans-serif;
  display: flex;
  align-items: center;
  justify-content: center;
  margin-right: 5px;
}
.title {
  font: 19px "Open Sans", sans-serif;
  color: #111;
  letter-spacing: -0.18px;
}
.win-btns {
  margin-left: auto;
  padding-right: 7px;
  display: flex;
}

/* 工具列 */
.toolbar {
  height: 105px;
  flex: none;
  background: #1a1614;
  display: flex;
  padding-left: 1px;
}
.menu-item {
  display: flex;
  flex-direction: column;
  align-items: center;
  flex: none;
  overflow: hidden;
}
.menu-item.active { background: #45474a; }
.menu-label {
  color: #f2f2f2;
  font-size: 18px;
  line-height: 20px;
  margin-top: 11px;
  white-space: nowrap;
}
.menu-icon { margin-top: 0; display: block; flex: none; position: relative; top: -2px; }
.ico-line { fill: none; stroke: #dcdcdc; }
.ico-green { fill: #7ab51d; }
.ico-glyph {
  font: bold 66px "Liberation Sans", sans-serif;
  fill: #1a1614;
  text-anchor: middle;
}
.ports {
  margin-left: auto;
  width: 302px;
  flex: none;
  padding-top: 9px;
}
.port-row { display: flex; align-items: flex-start; gap: 10px; }
.combo {
  background: #fff;
  box-sizing: border-box;
  border: 1px solid #aaa;
  display: flex;
  align-items: center;
  padding: 4px 2px;
  position: relative;
}
.combo-com { width: 181px; height: 33px; }
.combo-baud { width: 105px; height: 30px; }
.combo-txt {
  display: block;
  background: #f0f0f0;
  color: #777;
  font: 15px/23px "Liberation Mono", monospace;
  height: 23px;
}
.combo-com .combo-txt { width: 150px; }
.combo-baud .combo-txt { width: 72px; }
.chev {
  position: absolute;
  right: 9px;
  top: 9px;
  width: 7px;
  height: 7px;
  border-right: 1px solid #888;
  border-bottom: 1px solid #888;
  transform: rotate(45deg);
}
.stats-link {
  display: block;
  color: #f2f2f2;
  font-size: 17px;
  line-height: 20px;
  text-decoration: underline;
  margin: 10px 0 0 4px;
}
.disconnect {
  width: 132px;
  flex: none;
  display: flex;
  flex-direction: column;
  align-items: flex-end;
  padding-right: 10px;
  box-sizing: border-box;
}
.disconnect svg { margin-top: 12px; }

.main {
  flex: 1;
  display: flex;
  min-height: 0;
}
.left-col {
  width: 1365px;
  flex: none;
  display: flex;
  flex-direction: column;
}

/* HUD */
.hud { display: block; flex: none; }
.ht {
  fill: #fff;
  stroke: #555;
  stroke-width: 3px;
  paint-order: stroke;
  font-family: "Open Sans", "Noto Sans CJK SC", sans-serif;
}
.plain { stroke: #3d4a10; }
.mid { text-anchor: middle; }
.central { dominant-baseline: central; }
.wline { stroke: #fff; stroke-width: 3; fill: none; }
.lbl-in { font: 22px "Open Sans", sans-serif; fill: #fff; }
.warn {
  fill: #e3000f;
  stroke: #8a0a0a;
  stroke-width: 3px;
  paint-order: stroke;
  font-family: "Open Sans", "Noto Sans CJK SC", sans-serif;
}
.warn.heavy { font-weight: 700; }

/* 分頁 */
.tabs {
  height: 38px;
  flex: none;
  background: #252527;
  border-top: 2px solid #444;
  box-sizing: border-box;
  display: flex;
  align-items: flex-end;
  border-bottom: 2px solid #e8e8e8;
}
.tab {
  height: 27px;
  flex: none;
  box-sizing: border-box;
  background: #f0f0f0;
  border-right: 1px solid #d8d8d8;
  color: #111;
  font-size: 18px;
  line-height: 27px;
  padding-left: 10px;
  text-align: left;
  white-space: nowrap;
  overflow: hidden;
}
.tab.mono { font: 15px/27px "Liberation Mono", monospace; padding-left: 5px; -webkit-text-stroke: 0.4px #111; }
.tab.active {
  height: 32px;
  background: #fff;
  line-height: 33px;
  margin-bottom: -2px;
  border-right: none;
  padding-left: 13px;
}
.tab-page {
  flex: 1;
  background: #f0f0f0;
  padding: 2px 4px 4px 7px;
  min-height: 0;
}
.quick {
  height: 100%;
  background: #262729;
  display: grid;
  grid-template-columns: 676px 678px;
  grid-template-rows: repeat(3, 289px);
  overflow: hidden;
}
.quick-cell { display: flex; flex-direction: column; align-items: center; padding-right: 10px; box-sizing: border-box; }
.quick-cell:nth-child(odd) { padding-right: 0; }
.quick-label {
  color: #e6e6e6;
  font: 21px/40px "Noto Sans CJK SC", "Liberation Sans", sans-serif;
  height: 40px;
  flex: none;
}
.quick-value {
  font-family: "Liberation Sans", sans-serif;
  line-height: 249px;
  height: 249px;
  flex: none;
  white-space: nowrap;
}

/* 右欄 */
.right-col {
  margin-left: 7px;
  width: 545px;
  flex: none;
  display: flex;
  flex-direction: column;
  border-top: 5px solid #8a8a8a;
  border-left: 1px solid #8a8a8a;
  box-sizing: border-box;
  background: #262729;
  height: 1945px;
}
.map-row {
  display: flex;
  height: 1887px;
  flex: none;
  position: relative;
  padding: 2px 0 0 5px;
  box-sizing: border-box;
}
.map { display: block; flex: none; }
.green { fill: #bdd5a2; }
.road {
  fill: none;
  stroke: #fff;
  stroke-linejoin: round;
  vector-effect: non-scaling-stroke;
}
.road.thin { stroke-width: 4; }
.place {
  font-size: 16px;
  font-family: "Liberation Sans", "Noto Sans CJK SC", sans-serif;
  fill: #6b6b6b;
  stroke: #fff;
  stroke-width: 2px;
  paint-order: stroke;
  stroke-opacity: 0.7;
}
.place.light { fill: #a0a0a0; stroke: none; }
.place.bold { font-weight: 700; font-size: 18px; fill: #4a4a4a; }
.place.park { fill: #4d6b2e; }
.place.blue { font-weight: 700; font-size: 21px; fill: #2d6fb5; }
.place.teal { font-weight: 700; font-size: 19px; fill: #1aa5c8; }
.red-zero { font: bold 15px "Liberation Sans", sans-serif; fill: #e01010; }

.slider {
  position: relative;
  flex: 1;
  background: #262729;
}
.tick {
  position: absolute;
  width: 7px;
  height: 2px;
  background: #bbb;
}
.tick-l { left: 10px; }
.tick-r { left: 51px; }
.track {
  position: absolute;
  left: 28px;
  top: 10px;
  bottom: 2px;
  width: 6px;
  background: #d8d8d8;
}
.thumb {
  position: absolute;
  left: 15px;
  top: 550px;
  width: 31px;
  height: 17px;
  background: #0078d7;
}

/* 覆蓋文字 */
.ovl {
  position: absolute;
  background: #222;
  height: 17px;
  white-space: nowrap;
  overflow: hidden;
  font: 16px/17px "Noto Sans CJK SC", sans-serif;
}
.hdop, .sats { color: #e6e6e6; font: 15px/17px "Liberation Mono", monospace; left: 5px; }
.hdop { top: 1824px; width: 179px; }
.sats { top: 1849px; width: 113px; }
.tag-cur { top: 1849px; left: 130px; width: 79px; color: #d01010; text-align: center; font-size: 18px; }
.tag-wp { top: 1849px; left: 219px; width: 115px; color: #e88a10; text-align: center; font-size: 18px; }
.tag-tgt { top: 1849px; left: 343px; width: 79px; color: #0a7f1a; text-align: center; font-size: 18px; }
.tag-gps {
  top: 1849px;
  left: 430px;
  width: 110px;
  color: #eee;
  overflow: visible;
  font-size: 18px;
}
.mono-part { font: 14px "Liberation Mono", monospace; }
.copyright {
  position: absolute;
  top: 1867px;
  left: 13px;
  width: 455px;
  overflow: hidden;
  white-space: nowrap;
  color: #2b2b8a;
  font: 13.3px/16px "Liberation Sans", sans-serif;
}

/* 底部狀態列 */
.status-bar {
  height: 53px;
  flex: none;
  border-top: 1px solid #888;
  background: #262729;
  display: flex;
  align-items: flex-start;
  padding-left: 11px;
  position: relative;
  box-sizing: border-box;
  color: #bbb;
}
.geo {
  display: flex;
  width: 81px;
  height: 30px;
  margin-top: 10px;
  flex: none;
  border: 1px solid #777;
  box-sizing: border-box;
}
.geo-txt {
  width: 53px;
  background: #444;
  color: #ccc;
  font: 14px/28px "Liberation Mono", monospace;
  padding-left: 3px;
  box-sizing: border-box;
}
.geo-btn {
  flex: 1;
  background: #f0f0f0;
  display: flex;
  align-items: center;
  justify-content: center;
}
.geo-btn i {
  border-left: 4px solid transparent;
  border-right: 4px solid transparent;
  border-top: 4px solid #222;
}
.coord {
  font: 15px/30px "Liberation Mono", monospace;
  margin-top: 11px;
  margin-left: 7px;
  letter-spacing: 0.2px;
  flex: none;
}
.coord.dist { margin-left: 24px; }
.logo {
  position: relative;
  margin-left: 17px;
  width: 125px;
  flex: none;
  height: 48px;
  white-space: nowrap;
}
.logo-a {
  font-size: 33px;
  line-height: 44px;
  font-weight: 900;
  color: #3b8fd6;
  -webkit-text-stroke: 1px #dcecfa;
}
.logo-b {
  font-size: 22px;
  font-weight: 700;
  color: #1d6fb0;
  margin-left: 2px;
}
.logo-plane { position: absolute; left: 83px; top: -10px; }
.qr { position: absolute; right: 1px; top: -11px; }
</style>

<style>
html, body { margin: 0; background: #2a2b2d; }
</style>
